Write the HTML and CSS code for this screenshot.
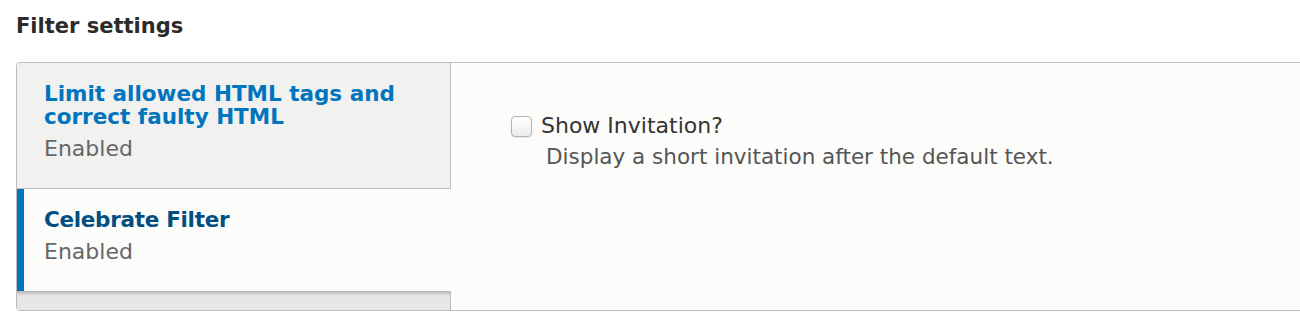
FILE: index.html
```html
<!DOCTYPE html>
<html lang="en">
<head>
<meta charset="utf-8">
<title>Filter settings</title>
<link rel="stylesheet" href="styles.css">
</head>
<body>
<h2 class="section-title">Filter settings</h2>
<div class="vtabs">
  <ul class="vtabs-menu">
    <li class="vtab">
      <a class="vtab-title" href="#">Limit allowed HTML tags and correct faulty HTML</a>
      <span class="vtab-summary">Enabled</span>
    </li>
    <li class="vtab is-selected">
      <a class="vtab-title" href="#">Celebrate Filter</a>
      <span class="vtab-summary">Enabled</span>
    </li>
    <li class="vtab-filler"></li>
  </ul>
  <div class="vtabs-pane">
    <div class="form-item">
      <div class="check-row">
        <input type="checkbox" id="show-invitation" class="checkbox">
        <label for="show-invitation" class="check-label">Show Invitation?</label>
      </div>
      <div class="description">Display a short invitation after the default text.</div>
    </div>
  </div>
</div>
</body>
</html>
```

FILE: styles.css
```css
html, body {
  overflow: hidden;
}
body {
  margin: 0;
  padding: 0 0 0 16px;
  font-family: "DejaVu Sans", "Liberation Sans", sans-serif;
  color: #333;
  background: #fff;
}
.section-title {
  margin: 14px 0 24px;
  font-size: 21px;
  line-height: 24px;
  font-weight: bold;
  color: #2b2b2b;
}
.vtabs {
  display: flex;
  width: 1320px;
  height: 249px;
  box-sizing: border-box;
  border: 1px solid #bdbdbd;
  border-radius: 4px;
  overflow: hidden;
  background: #fcfcfa;
}
.vtabs-menu {
  display: flex;
  flex-direction: column;
  width: 434px;
  flex: none;
  margin: 0;
  padding: 0;
  list-style: none;
}
.vtab {
  display: flex;
  flex-direction: column;
  box-sizing: border-box;
  padding: 19px 20px 27px 27px;
  background: #f1f1f0;
  border-right: 1px solid #bdbdbd;
  border-bottom: 1px solid #bdbdbd;
}
.vtab-title {
  font-size: 21.5px;
  line-height: 23px;
  font-weight: bold;
  color: #0074bd;
  text-decoration: none;
  margin-bottom: 9px;
}
.vtab-summary {
  font-size: 22px;
  line-height: 24px;
  color: #666;
}
.vtab.is-selected {
  background: #fcfcfa;
  border-right: 0;
  border-bottom: 0;
  border-left: 7px solid #0074bd;
  padding-left: 20px;
}
.vtab.is-selected .vtab-title {
  color: #004f80;
  letter-spacing: -0.3px;
}
.vtab-filler {
  flex: 1;
  background: #e7e7e5;
  border-right: 1px solid #bdbdbd;
  box-shadow: inset 0 6px 5px -5px rgba(0, 0, 0, 0.35);
}
.vtabs-pane {
  flex: 1;
  padding: 51px 0 0 60px;
}
.check-row {
  display: flex;
  align-items: center;
}
.checkbox {
  appearance: none;
  -webkit-appearance: none;
  width: 21px;
  height: 21px;
  margin: 0;
  box-sizing: border-box;
  border: 1px solid #b3b3b3;
  border-radius: 4px;
  background: linear-gradient(#ffffff, #ececec);
  box-shadow: 0 1px 1px rgba(0, 0, 0, 0.08);
}
.check-label {
  margin-left: 9px;
  font-size: 22px;
  line-height: 24px;
  color: #333;
}
.description {
  margin: 7px 0 0 35px;
  font-size: 21.5px;
  line-height: 24px;
  color: #555;
}
```
